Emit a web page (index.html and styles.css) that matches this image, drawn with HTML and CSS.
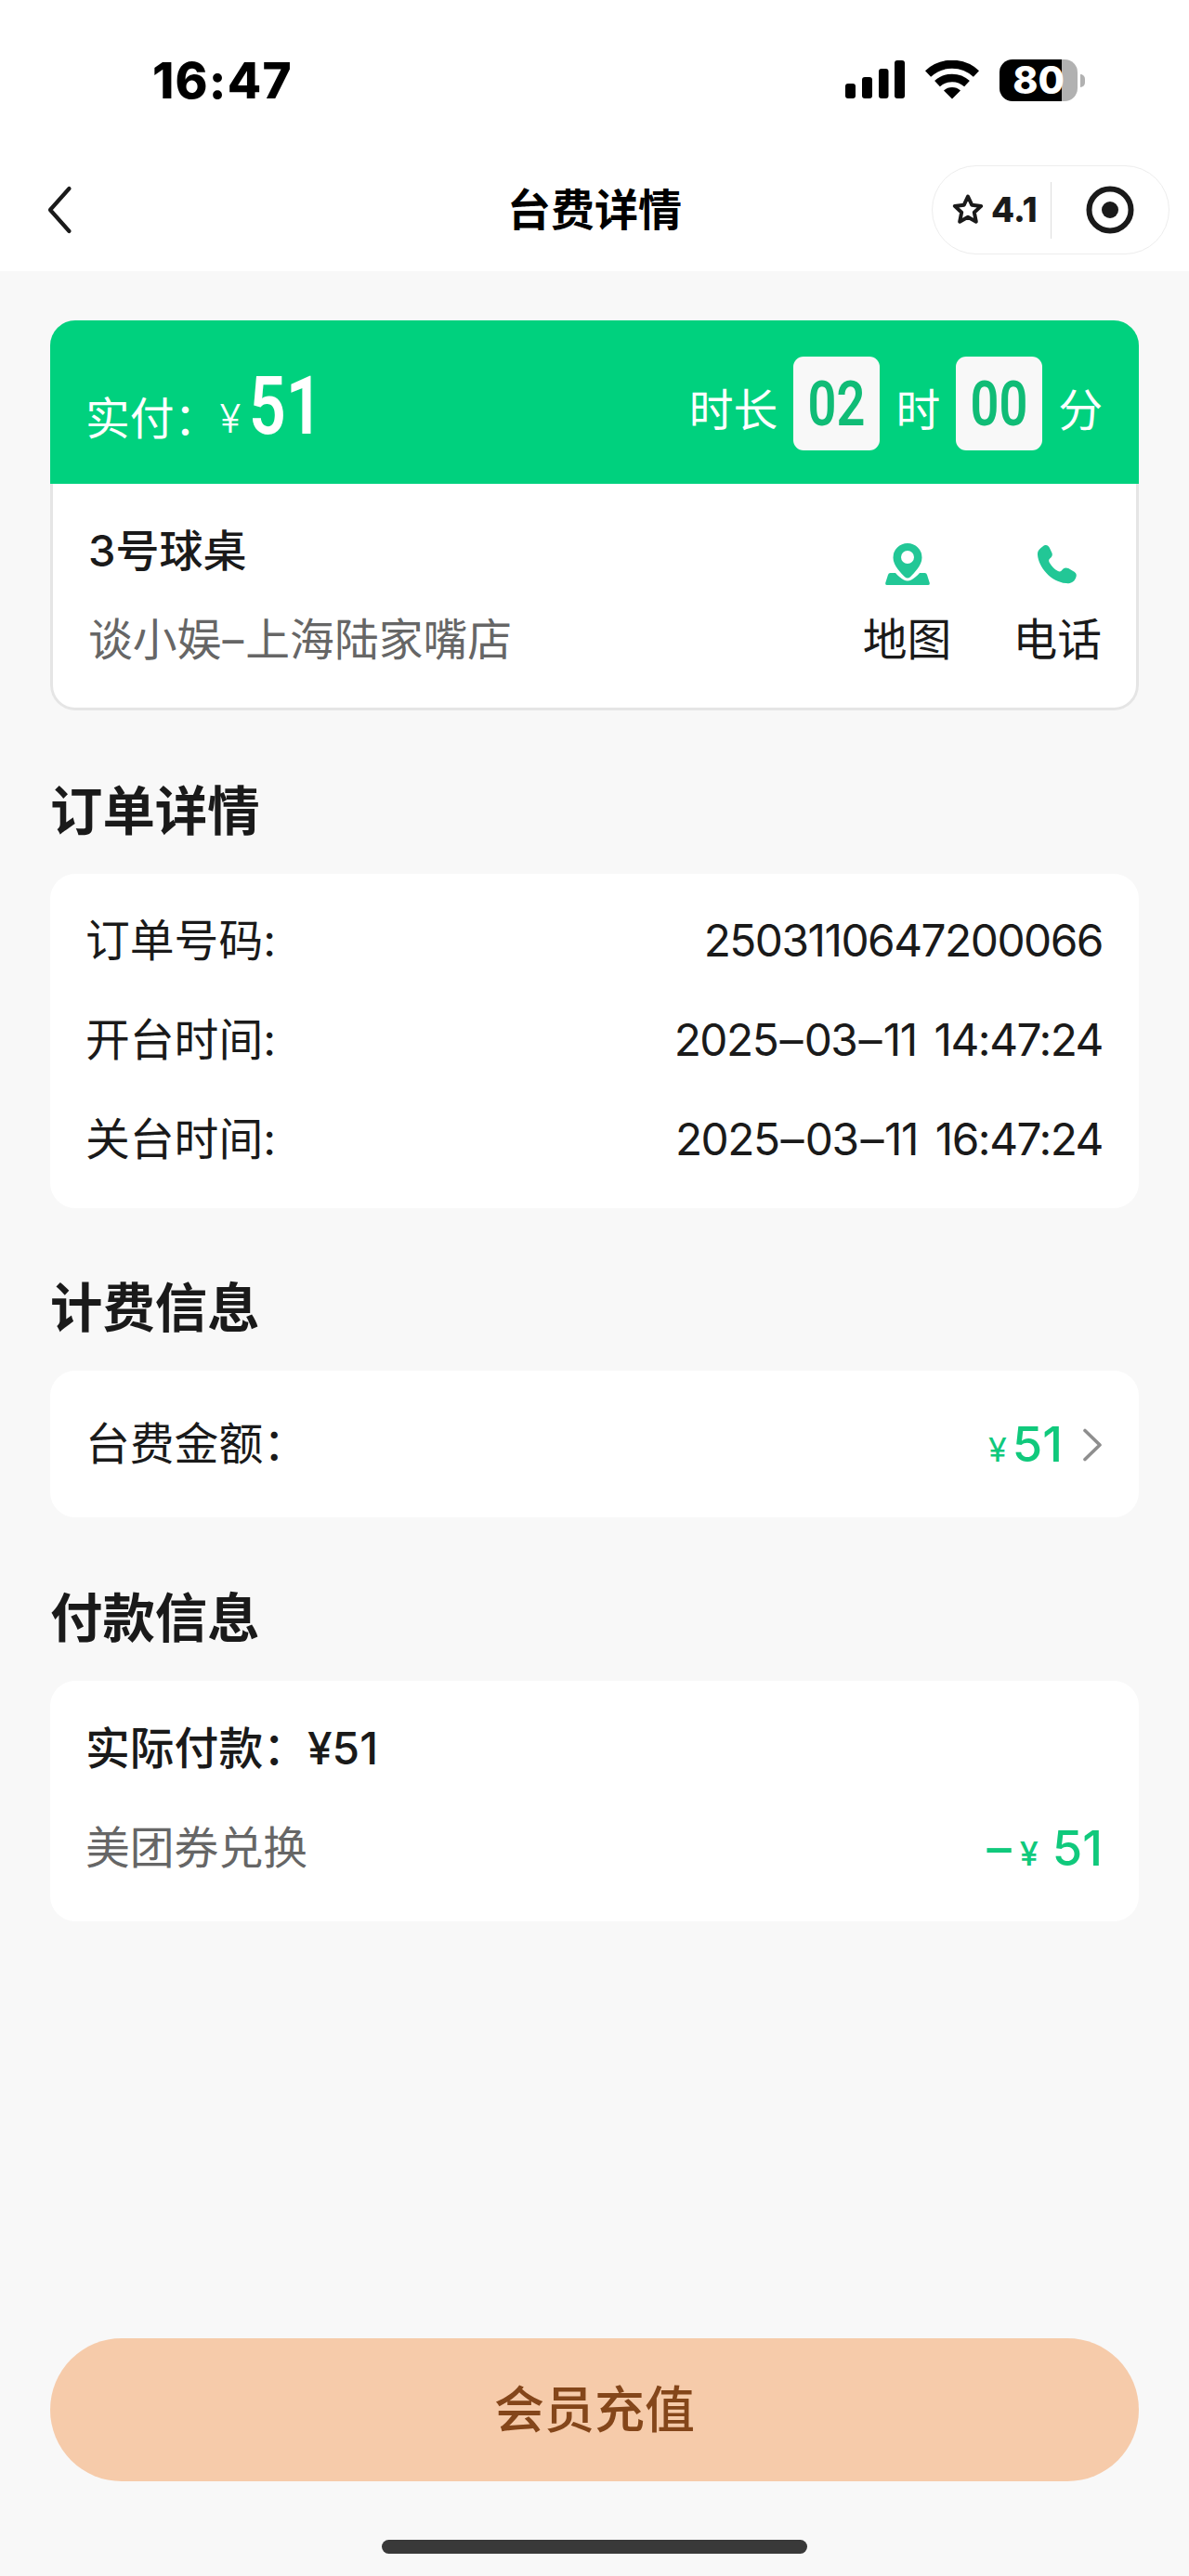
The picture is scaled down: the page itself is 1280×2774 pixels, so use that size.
FILE: index.html
```html
<!DOCTYPE html>
<html lang="zh-CN">
<head>
    <meta charset="UTF-8">
    <meta name="viewport" content="width=device-width, initial-scale=1.0">
    <title>台费详情</title>
    <link rel="stylesheet" href="styles.css">
</head>
<body>
    <div class="page">
        <!-- Status bar + navigation -->
        <header class="header">
            <div class="status-bar">
                <span class="time">16:47</span>
                <div class="status-icons">
                    <svg class="signal" width="64" height="42" viewBox="0 0 64 42">
                        <rect x="0" y="25" width="11" height="16" rx="3"/>
                        <rect x="18" y="18" width="11" height="23" rx="3"/>
                        <rect x="36" y="9" width="10.5" height="32" rx="3"/>
                        <rect x="53" y="0" width="11" height="41" rx="3"/>
                    </svg>
                    <svg class="wifi" width="58" height="42" viewBox="0 0 58 42">
                        <path d="M3 14.5a38 38 0 0 1 52 0" fill="none" stroke="#000" stroke-width="9"/>
                        <path d="M13 25.2a23.5 23.5 0 0 1 32 0" fill="none" stroke="#000" stroke-width="8.5"/>
                        <path d="M29 41.5l-9-9a13.5 13.5 0 0 1 18 0z"/>
                    </svg>
                    <div class="battery"><span>80</span></div>
                </div>
            </div>
            <div class="nav-bar">
                <svg class="back" width="30" height="54" viewBox="0 0 30 54">
                    <path d="M26.5 4L6 27l20.5 23" fill="none" stroke="#1a1a1a" stroke-width="4.2" stroke-linecap="round" stroke-linejoin="round"/>
                </svg>
                <h1 class="title">台费详情</h1>
                <div class="capsule">
                    <div class="rating">
                        <svg width="36" height="36" viewBox="0 0 36 36">
                            <path d="M18 3.5l4.2 9.2 10 1.2-7.4 6.8 2 10L18 25.8l-8.8 4.9 2-10-7.4-6.8 10-1.2z" fill="none" stroke="#1a1a1a" stroke-width="4" stroke-linejoin="round"/>
                        </svg>
                        <span>4.1</span>
                    </div>
                    <div class="close">
                        <svg width="52" height="52" viewBox="0 0 52 52">
                            <circle cx="26" cy="26" r="22.5" fill="none" stroke="#1a1a1a" stroke-width="6"/>
                            <circle cx="26" cy="26" r="9" fill="#1a1a1a"/>
                        </svg>
                    </div>
                </div>
            </div>
        </header>

        <main class="content">
            <!-- Summary card -->
            <div class="summary">
                <div class="summary-top">
                    <div class="paid">
                        <span>实付：</span>
                        <span class="paid-yen">¥</span>
                        <span class="paid-num">51</span>
                    </div>
                    <div class="duration">
                        <span>时长</span>
                        <span class="num-box"><b>02</b></span>
                        <span>时</span>
                        <span class="num-box"><b>00</b></span>
                        <span>分</span>
                    </div>
                </div>
                <div class="summary-bottom">
                    <div class="store">
                        <p class="table-name">3号球桌</p>
                        <p class="store-name">谈小娱<i class="dash">–</i>上海陆家嘴店</p>
                    </div>
                    <div class="actions">
                        <div class="action">
                            <svg width="48" height="46" viewBox="0 0 48 46">
                                <path fill-rule="evenodd" d="M24 0a15.5 15.5 0 0 0-15.5 15.5C8.5 24 17 32 21 36.2q3 2.8 6 0C31 32 39.5 24 39.5 15.5A15.5 15.5 0 0 0 24 0zm0 8a7 7 0 1 1 0 14 7 7 0 0 1 0-14z"/>
                                <path d="M5.5 32h5.5c3 3.5 6.5 6.2 9 7.5q4 2 8 0c2.5-1.3 6-4 9-7.5h5.5q2 0 2.5 2l2.7 8.5q.6 2.5-1.7 2.5h-44q-2.3 0-1.7-2.5L3 34q.5-2 2.5-2z"/>
                            </svg>
                            <span>地图</span>
                        </div>
                        <div class="action">
                            <svg width="48" height="46" viewBox="0 0 48 46">
                                <path d="M8.5 3.500C12 .8 14.5 2 16.5 6.2l2 4.3c1 3-.5 4.5-2.5 6.2-1.5 1.3-.8 3 .2 4.8 2.200 3.600 4.800 6.300 8.300 8.300 1.800 1 3 1 4.300-.3 2-2.700 4-4 7.400-2.400l5 2.800c4 2.200 4.300 4.500 2.600 8-2 4.300-5.800 5.600-10.300 5.200C17 41.500 4 25.500 3 12.500c-.2-4 1.800-6.500 5.500-9z"/>
                            </svg>
                            <span>电话</span>
                        </div>
                    </div>
                </div>
            </div>

            <!-- Order info -->
            <h2>订单详情</h2>
            <div class="card order">
                <div class="row"><span>订单号码:</span><span class="value">2503110647200066</span></div>
                <div class="row"><span>开台时间:</span><span class="value">2025<i class="dash">–</i>03<i class="dash">–</i>11 14:47:24</span></div>
                <div class="row"><span>关台时间:</span><span class="value">2025<i class="dash">–</i>03<i class="dash">–</i>11 16:47:24</span></div>
            </div>

            <!-- Billing -->
            <h2>计费信息</h2>
            <div class="card billing">
                <span>台费金额：</span>
                <div class="amount">
                    <span class="yen">¥</span>
                    <span class="money">51</span>
                    <svg width="22" height="36" viewBox="0 0 22 36">
                        <path d="M3 2.5L19 18 3 33.5" fill="none" stroke="#8e8e8e" stroke-width="3.6" stroke-linecap="round" stroke-linejoin="round"/>
                    </svg>
                </div>
            </div>

            <!-- Payment -->
            <h2>付款信息</h2>
            <div class="card payment">
                <div class="row actual"><span>实际付款：¥51</span></div>
                <div class="row coupon">
                    <span>美团券兑换</span>
                    <div class="amount">
                        <span class="money">–</span>
                        <span class="yen bold">¥</span>
                        <span class="money">51</span>
                    </div>
                </div>
            </div>
        </main>

        <footer class="footer">
            <button class="recharge">会员充值</button>
            <div class="home-indicator"></div>
        </footer>
    </div>
</body>
</html>
```
FILE: styles.css
```css
* {
    box-sizing: border-box;
    margin: 0;
    padding: 0;
}

body {
    background-color: #f8f8f8;
    color: #1a1a1a;
    font-family: Inter, "Noto Sans CJK SC", sans-serif;
    font-size: 47.8px;
    line-height: 66px;
}

svg {
    display: block;
    flex: none;
}

.page {
    display: flex;
    flex-direction: column;
    width: 1280px;
    height: 2774px;
}

/* Header */
.header {
    height: 292px;
    background-color: #fff;
}

.status-bar {
    display: flex;
    justify-content: space-between;
    align-items: center;
    height: 172px;
    padding: 0 120px 0 164px;
}

.time {
    padding-top: 2px;
    color: #000;
    font-size: 53px;
    font-weight: 800;
    letter-spacing: 1.2px;
}

.status-icons {
    display: flex;
    align-items: center;
}

.wifi {
    margin: 0 22px;
}

.battery {
    position: relative;
    width: 84px;
    height: 45px;
    border-radius: 14px;
    background: linear-gradient(to right, #000 67px, #b1b1b1 67px);
    color: #fff;
    font-size: 41px;
    font-weight: 800;
    line-height: 45px;
    text-align: center;
}

/* Battery tip */
.battery::after {
    content: "";
    position: absolute;
    right: -8px;
    top: 16px;
    width: 5px;
    height: 14px;
    border-radius: 0 6px 6px 0;
    background-color: #b1b1b1;
}

.nav-bar {
    display: grid;
    grid-template-columns: 256px 1fr 256px;
    align-items: center;
    height: 108px;
    padding: 0 21px 0 48px;
}

.title {
    padding-right: 27px;
    color: #000;
    font-size: 47px;
    font-weight: 700;
    text-align: center;
}

.capsule {
    display: flex;
    align-items: center;
    height: 96px;
    border: 1px solid #ededed;
    border-radius: 48px;
}

.rating {
    display: flex;
    align-items: center;
    gap: 7px;
    width: 128px;
    height: 61px;
    padding-left: 20px;
    border-right: 1px solid #dedede;
    font-size: 36.5px;
    font-weight: 800;
}

.close {
    display: flex;
    flex: 1;
    justify-content: center;
}

/* Content */
.content {
    flex: 1;
    padding: 53px 54px 0;
}

.summary {
    height: 420px;
    border-radius: 27px;
    background-color: #fff;
    box-shadow: inset 0 0 0 3px #e5e5e5;
    overflow: hidden;
}

.summary-top {
    display: flex;
    justify-content: space-between;
    height: 176px;
    padding: 38px 39px 0 38px;
    background-color: #00d17e;
    color: #fff;
}

.paid {
    display: flex;
    padding-top: 35px;
}

.paid-yen {
    margin-left: 1px;
    font-size: 42px;
    font-weight: 300;
}

.paid-num {
    margin: -14px 0 0 9px;
    font-family: Roboto, sans-serif;
    font-size: 87px;
    font-weight: 600;
    transform: scaleX(0.8);
    transform-origin: left;
}

.duration {
    display: flex;
    gap: 17px;
    padding-top: 1px;
    line-height: 116px;
}

.num-box {
    width: 93px;
    height: 101px;
    border-radius: 11px;
    background-color: #f8f8f8;
    color: #10bc76;
    text-align: center;
    line-height: 103px;
}

.num-box b {
    display: block;
    font-family: Roboto, sans-serif;
    font-size: 66px;
    font-weight: 600;
    transform: scaleX(0.82);
}

.summary-bottom {
    display: flex;
    justify-content: space-between;
    padding: 39px 40px 0 41px;
}

.table-name {
    font-size: 47px;
    font-weight: 500;
}

.store-name {
    margin-top: 30px;
    color: #666;
}

.dash {
    display: inline-block;
    margin: 0 3px;
    font-style: normal;
    transform: scaleX(1.05);
}

.store-name .dash {
    margin: 0 1px;
    transform: scaleX(0.95);
}

.actions {
    display: flex;
    gap: 66px;
    padding-top: 25px;
}

.action {
    display: flex;
    flex-direction: column;
    align-items: center;
    gap: 25px;
    fill: #22c796;
}

h2 {
    margin: 68.7px 0 27px;
    font-size: 56.4px;
    font-weight: 700;
    line-height: 80px;
}

.card {
    padding: 0 39px 0 38px;
    border-radius: 27px;
    background-color: #fff;
}

.row {
    display: flex;
    justify-content: space-between;
    align-items: center;
    height: 107px;
}

.order {
    height: 360px;
    padding-top: 19px;
}

.value {
    letter-spacing: -1.5px;
    word-spacing: 7px;
}

.billing {
    display: flex;
    justify-content: space-between;
    align-items: center;
    height: 158px;
}

.amount {
    display: flex;
    align-items: baseline;
    padding-top: 6px;
    color: #10c97c;
}

.amount svg {
    margin: 0 0 2px 21px;
}

.money {
    font-size: 52.5px;
    font-weight: 500;
}

.yen {
    margin-right: 6px;
    font-size: 36px;
}

.yen.bold {
    margin: 0 15px 0 9px;
    font-weight: 500;
}

.payment {
    height: 259px;
    padding-top: 19px;
}

.actual {
    font-weight: 500;
}

.coupon > span {
    color: #666;
}

/* Footer */
.footer {
    padding: 0 54px;
    height: 256px;
}

.recharge {
    display: block;
    width: 100%;
    height: 154px;
    padding-bottom: 8px;
    border: none;
    border-radius: 77px;
    background-color: #f6cbaa;
    color: #84461a;
    font-family: inherit;
    font-size: 54px;
    font-weight: 500;
}

.home-indicator {
    width: 458px;
    height: 15px;
    margin: 63px auto 0;
    border-radius: 8px;
    background-color: #393939;
}
```
